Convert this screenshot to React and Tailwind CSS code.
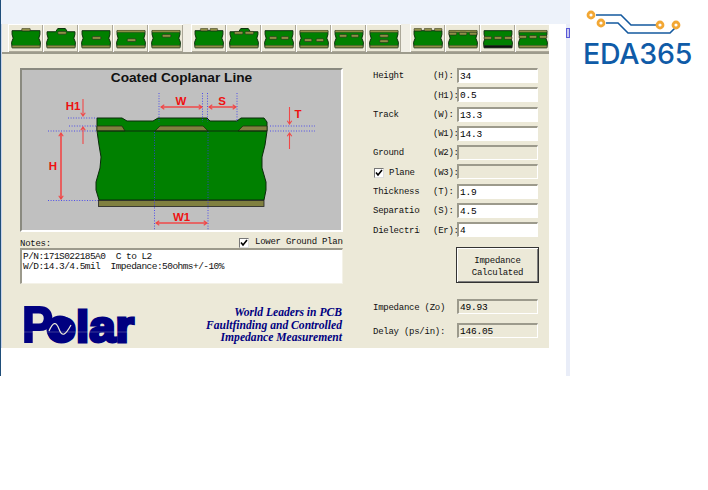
const mono = { fontFamily: '"Liberation Mono", monospace' };

const OLIVE = "#8f8f45";

const ICONS = [
  { t: [[10, 0.2, 8]] },
  { coat: 1, t: [[11, 3.2, 8]] },
  { t: [[10.5, 8, 8]] },
  { p: 1, t: [[10.5, 10, 8]] },
  { p: 1, t: [[10.5, 6, 8]] },
  { t: [[6, 0.2, 7], [15, 0.2, 7]] },
  { coat: 1, t: [[5, 3.2, 8], [15, 3.2, 8]] },
  { t: [[5, 8, 7], [16, 8, 7]] },
  { p: 1, t: [[5, 10, 7], [16, 10, 7]] },
  { p: 1, t: [[5, 6, 7], [16, 6, 7]] },
  { p: 1, t: [[10, 6, 8], [10, 11, 8]] },
  { t: [[1, 0.2, 7], [10.5, 0.2, 7], [20, 0.2, 7]] },
  { p: 1, t: [[1, 4, 7], [10.5, 4, 7], [20, 4, 7]] },
  { t: [[1, 8, 7], [10.5, 8, 7], [20, 8, 7]], dark: 1 },
  { p: 1, t: [[1, 7, 7], [10.5, 7, 7], [20, 7, 7]] },
];

function BoardIcon({ icon }) {
  return (
    <svg width="30" height="21" viewBox="0 0 28 19.6">
      <path
        d={
          icon.coat
            ? "M1 3.5 L9 3.5 L11 0.5 L18 0.5 L20 3.5 L27 3.5 V6 L26 9.5 L27.5 13.5 L27 18.5 H1 L0.5 13.5 L2 9.5 L1 6 Z"
            : "M1 2.5 H27 V6 L26 9.5 L27.5 13.5 L27 18.5 H1 L0.5 13.5 L2 9.5 L1 6 Z"
        }
        fill="#008000"
        stroke="#0a2a0a"
        strokeWidth="0.9"
      />
      {icon.p ? <rect x="1" y="2" width="26" height="2" fill={OLIVE} stroke="#333" strokeWidth="0.3" /> : null}
      <rect x="1" y="16.2" width="26" height="2.2" fill={icon.dark ? "#111" : OLIVE} stroke="#333" strokeWidth="0.3" />
      {icon.t.map(([x, y, w], i) => (
        <rect key={i} x={x} y={y} width={w} height="2.6" rx="1" fill={OLIVE} stroke="#222" strokeWidth="0.5" />
      ))}
    </svg>
  );
}

function ToolButton({ icon }) {
  return (
    <div className="w-[35px] h-[28px] shrink-0 flex items-center justify-center bg-[#ece9d8] shadow-[inset_1px_1px_0_#fff,inset_-1px_-1px_0_#aca899]">
      <BoardIcon icon={icon} />
    </div>
  );
}

function Toolbar() {
  return (
    <div className="h-[30px] flex pl-[6px] bg-[#f1efe6] border-b-2 border-[#9d9b8c] overflow-hidden">
      <div className="flex">
        {ICONS.slice(0, 5).map((ic, i) => <ToolButton key={i} icon={ic} />)}
      </div>
      <div className="flex ml-[8px]">
        {ICONS.slice(5, 11).map((ic, i) => <ToolButton key={i} icon={ic} />)}
      </div>
      <div className="flex ml-[9px]">
        {ICONS.slice(11).map((ic, i) => <ToolButton key={i} icon={ic} />)}
      </div>
    </div>
  );
}

function Arrow({ x1, y1, x2, y2 }) {
  const a = Math.atan2(y2 - y1, x2 - x1);
  const head = (x, y, ang) => {
    const s = 4;
    const p1 = [x - s * Math.cos(ang - 0.6), y - s * Math.sin(ang - 0.6)];
    const p2 = [x - s * Math.cos(ang + 0.6), y - s * Math.sin(ang + 0.6)];
    return `M${p1[0]} ${p1[1]} L${x} ${y} L${p2[0]} ${p2[1]}`;
  };
  return <path d={`M${x1} ${y1} L${x2} ${y2} ${head(x2, y2, a)}`} stroke="#f04848" strokeWidth="1.1" fill="none" />;
}

function DoubleArrow({ x1, y1, x2, y2 }) {
  return (
    <g>
      <Arrow x1={x1} y1={y1} x2={x2} y2={y2} />
      <Arrow x1={x2} y1={y2} x2={x1} y2={y1} />
    </g>
  );
}

function Dots({ d }) {
  return <path d={d} stroke="#3a3af0" strokeWidth="1" strokeDasharray="1 1.6" opacity="0.85" fill="none" />;
}

function Label({ x, y, children }) {
  return (
    <text x={x} y={y} textAnchor="middle" fill="#ee1111" fontSize="11.5" fontWeight="700" style={{ fontFamily: '"Liberation Sans", sans-serif' }}>
      {children}
    </text>
  );
}

function Diagram() {
  return (
    <div className="h-[164px] border-2 border-[#8a8a80] border-r-white border-b-white bg-[#c0c0c0]">
      <svg width="318" height="160" viewBox="22 70 318 160" className="block">
        <text x="181.5" y="81.5" textAnchor="middle" fontSize="13.7" fontWeight="700" fill="#111" style={{ fontFamily: '"Liberation Sans", sans-serif' }}>
          Coated Coplanar Line
        </text>
        <path
          d="M97 118 L122 118 L127 121 L153 121 L158 118 L207 118 L210 121 L237 121 L241 118 L264 118 L267 122 L267 131 L265 145 L262 157 L262 168 L266 182 L266 190 L264 200 L99 200 L96 190 L96 182 L100 168 L101 157 L99 145 L97 131 Z"
          fill="#008000"
          stroke="#0a2a0a"
          strokeWidth="1"
        />
        <path d="M97 126 L122 126 L125 131 L97 131 Z M155 131 L160 126 L203 126 L208 131 Z M238 131 L243 126 L267 126 L267 131 Z" fill="#808040" stroke="#203010" strokeWidth="0.8" />
        <path d="M97 131 H267" stroke="#0a2a0a" strokeWidth="1" />
        <rect x="98.5" y="200.5" width="165.5" height="6" fill="#808040" stroke="#222" strokeWidth="0.8" />
        <Dots d="M159 93 V122 M202.5 93 V122 M207.5 93 V122 M237 93 V122 M154.5 132 V230 M208 132 V230 M68 118 H97 M69 126 H97 M48 131 H97 M48 200.5 H98 M270 126 H315 M270 131 H315" />
        <DoubleArrow x1={161} y1={107} x2={202} y2={107} />
        <DoubleArrow x1={209} y1={107} x2={236} y2={107} />
        <DoubleArrow x1={156} y1={223} x2={207} y2={223} />
        <DoubleArrow x1={61} y1={133} x2={61} y2={199} />
        <Arrow x1={83} y1={99} x2={83} y2={116} />
        <Arrow x1={83} y1={144} x2={83} y2={127} />
        <Arrow x1={289.5} y1={107} x2={289.5} y2={124} />
        <Arrow x1={289.5} y1={149} x2={289.5} y2={133} />
        <Label x={181} y={105}>W</Label>
        <Label x={222} y={105}>S</Label>
        <Label x={73} y={110}>H1</Label>
        <Label x={53} y={170}>H</Label>
        <Label x={298} y={118}>T</Label>
        <Label x={181.5} y={221}>W1</Label>
      </svg>
    </div>
  );
}

function Check() {
  return (
    <div className="w-[10px] h-[10px] shrink-0 bg-white border border-[#777] border-r-[#ddd] border-b-[#ddd] flex items-center justify-center">
      <svg width="8" height="8" viewBox="0 0 8 8"><path d="M1 3.5 L3 6 L7 1" stroke="#000" strokeWidth="1.6" fill="none" /></svg>
    </div>
  );
}

function Field({ value, disabled }) {
  return (
    <div
      style={mono}
      className={
        "h-[15px] w-[81px] px-[1px] text-[9.5px] leading-[14px] tracking-[-0.2px] text-black border-t-2 border-l-2 border-[#9c9a8c] border-r border-b border-r-white border-b-white " +
        (disabled ? "bg-[#ece9d8]" : "bg-white")
      }
    >
      {value}
    </div>
  );
}

const ROWS = [
  ["Height", "(H):", "34"],
  ["", "(H1):", "0.5"],
  ["Track", "(W):", "13.3"],
  ["", "(W1):", "14.3"],
  ["Ground", "(W2):", "", true],
  ["Plane", "(W3):", "", true, true],
  ["Thickness", "(T):", "1.9"],
  ["Separation", "(S):", "4.5"],
  ["Dielectric", "(Er):", "4"],
];

function Form() {
  return (
    <div style={mono} className="w-[166px] pt-[14px] text-[9px] tracking-[-0.25px] text-[#111]">
      <div className="flex flex-col gap-[4.3px]">
        {ROWS.map(([label, code, value, disabled, check], i) => (
          <div key={i} className="flex items-center h-[15px]">
            <div className="w-[60px] flex items-center pt-[3px]">
              {check ? (
                <div className="flex items-center gap-[5px] pl-[1px]">
                  <Check />
                  <span>{label}</span>
                </div>
              ) : (
                <span className="block w-[47px] overflow-hidden whitespace-nowrap">{label}</span>
              )}
            </div>
            <div className="w-[24px] whitespace-nowrap pt-[3px]">{code}</div>
            <Field value={value} disabled={disabled} />
          </div>
        ))}
      </div>
      <div className="ml-[83px] mt-[10px] w-[83px] h-[36px] pt-[3px] flex items-center justify-center text-center leading-[12px] bg-[#ece9d8] border border-[#333] shadow-[inset_1px_1px_0_#fff,inset_-1px_-1px_0_#808080]">
        Impedance<br />Calculated
      </div>
      <div className="mt-[16px] flex items-center h-[15px]">
        <div className="w-[84px] whitespace-nowrap pt-[4px]">Impedance (Zo)</div>
        <Field value="49.93" disabled />
      </div>
      <div className="mt-[9px] flex items-center h-[15px]">
        <div className="w-[84px] whitespace-nowrap pt-[4px]">Delay (ps/in):</div>
        <Field value="146.05" disabled />
      </div>
    </div>
  );
}

function PolarLogo() {
  const f = { fontFamily: '"Liberation Sans", sans-serif', fontWeight: 700 };
  return (
    <svg width="116" height="56" viewBox="20 298 116 56" className="block shrink-0">
      <text x="22" y="342" fontSize="50" fill="#000080" stroke="#000080" strokeWidth="2" textLength="31" lengthAdjust="spacingAndGlyphs" style={f}>P</text>
      <text x="47" y="342" fontSize="45" fill="#000080" stroke="#000080" strokeWidth="3" textLength="87" lengthAdjust="spacingAndGlyphs" style={f}>olar</text>
      <circle cx="60" cy="329" r="13.5" fill="#000080" />
      <path d="M49 331 C53 322 56 321 59 329 C62 337 65 336 71 325" stroke="#ece9d8" strokeWidth="1.2" fill="none" />
      <path d="M21 332 H135" stroke="#ece9d8" strokeWidth="0.5" opacity="0.5" />
    </svg>
  );
}

function Notes() {
  return (
    <div className="w-[323px] pt-[14px] shrink-0">
      <Diagram />
      <div style={mono} className="h-[16px] flex justify-between items-start text-[9px] tracking-[-0.25px] text-[#111]">
        <span className="self-end leading-[7px]">Notes:</span>
        <div className="flex items-center gap-[6px] pt-[4px] w-[104px] overflow-hidden whitespace-nowrap">
          <Check />
          <span>Lower Ground Plane</span>
        </div>
      </div>
      <div style={mono} className="h-[36px] px-[1px] pt-[2px] bg-white border-t-2 border-l-2 border-[#9c9a8c] border-r border-b border-r-[#f4f2e8] border-b-[#f4f2e8] text-[9.5px] leading-[10px] tracking-[-0.55px] text-[#111] whitespace-pre">
        {"P/N:171S022185A0  C to L2\nW/D:14.3/4.5mil  Impedance:50ohms+/-10%"}
      </div>
      <div className="mt-[14px] flex justify-between items-start">
        <PolarLogo />
        <div className="mt-[9px] pr-[1px] text-right text-[11.6px] leading-[12.5px] font-bold italic text-[#000080]" style={{ fontFamily: '"Liberation Serif", serif' }}>
          World Leaders in PCB<br />
          Faultfinding and Controlled<br />
          Impedance Measurement
        </div>
      </div>
    </div>
  );
}

function Eda365() {
  return (
    <div className="pt-[8px] pl-[13px]">
      <svg width="100" height="32" viewBox="583 8 100 32" className="block">
        <path d="M596 15 H621 L631 25 H656 M606 23 H618 L628 33 H670 L675 28" stroke="#14599f" strokeWidth="1.6" fill="none" />
        {[[591, 15], [601, 23], [660, 25], [676, 25]].map(([x, y], i) => (
          <circle key={i} cx={x} cy={y} r="3" fill="#fff" stroke="#f2a734" strokeWidth="2.8" />
        ))}
      </svg>
      <div className="mt-[-1px] text-[28.5px] leading-[30px] font-medium text-[#0f5ba7] tracking-[-0.2px]" style={{ fontFamily: 'Inter, sans-serif' }}>
        EDA365
      </div>
    </div>
  );
}

export default function App() {
  return (
    <div className="w-[708px] h-[490px] bg-white flex items-start overflow-hidden">
      <div className="w-[570px] h-[376px] shrink-0 border-l border-[#1f4e79] bg-white">
        <div className="h-[24px] bg-[#edf2fa]" />
        <div className="flex h-[352px]">
          <div className="w-[1px] h-[324px] bg-[#c8d4ec]" />
          <div className="w-[547px] h-[324px] bg-[#ece9d8]">
            <Toolbar />
            <div className="flex pl-[18px] gap-[30px]">
              <Notes />
              <Form />
            </div>
          </div>
          <div className="w-[17px]" />
          <div className="w-[4px] bg-[#e9edf8] pt-[4px]">
            <div className="h-[10px] border border-[#5a5ad8] bg-[#c9c9f0]" />
          </div>
        </div>
      </div>
      <Eda365 />
    </div>
  );
}
